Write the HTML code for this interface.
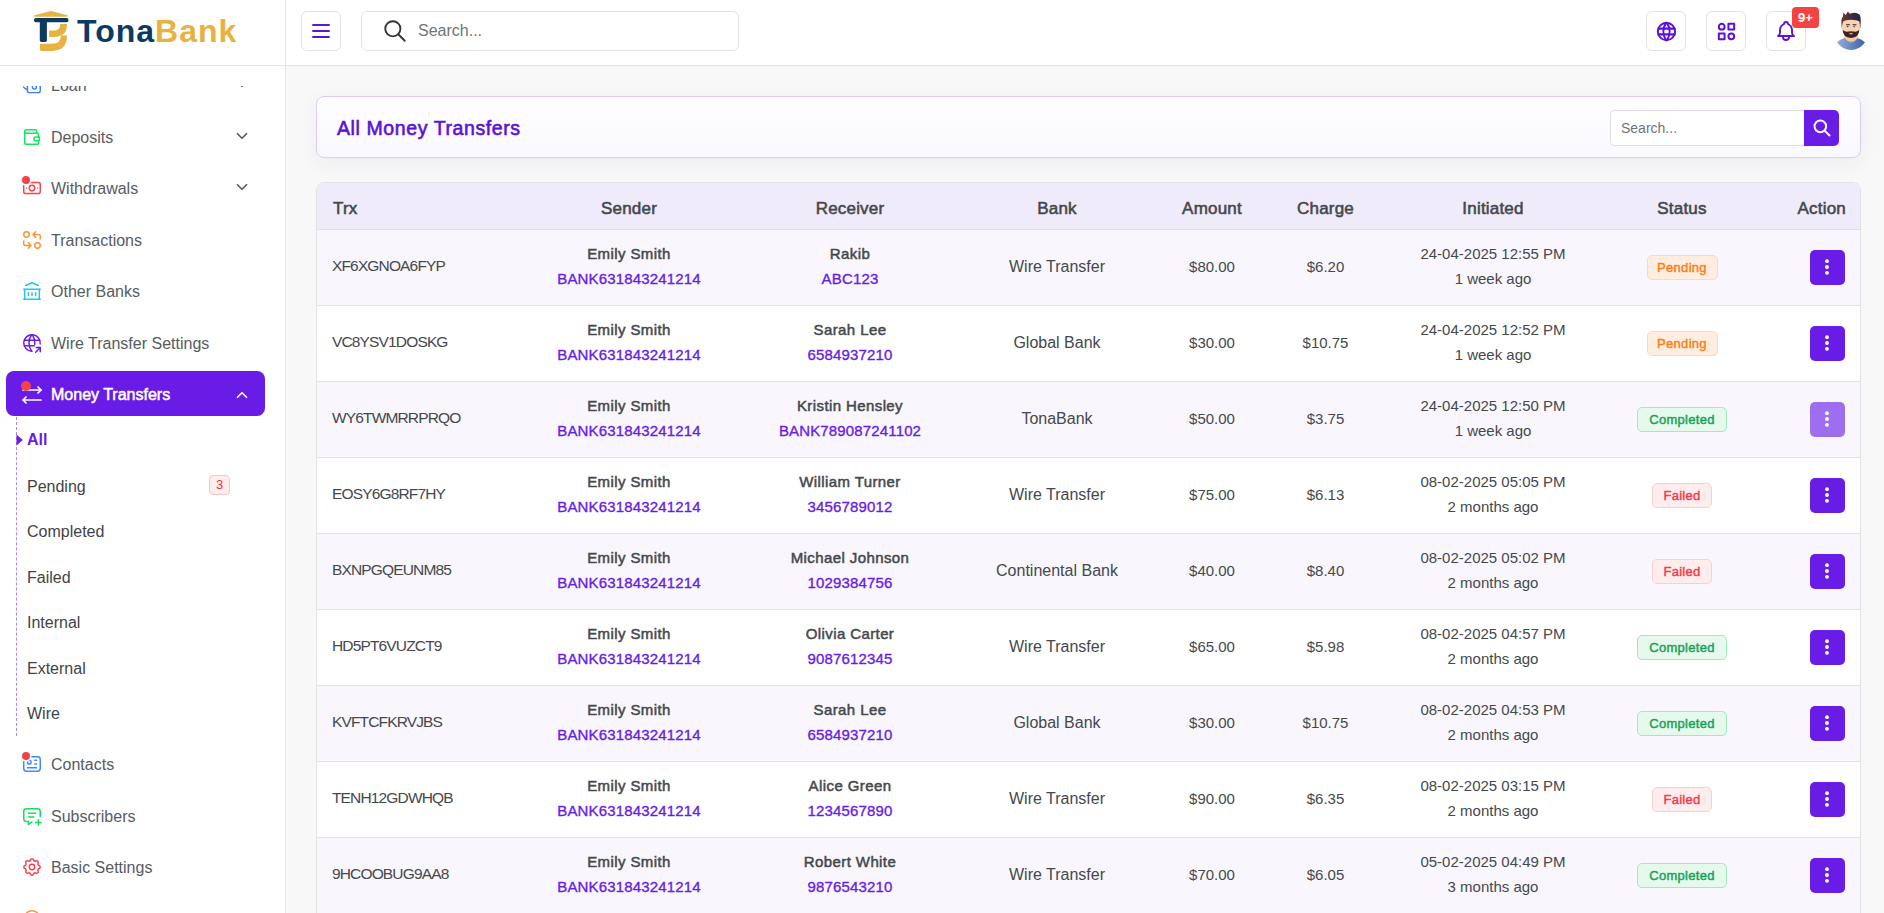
<!DOCTYPE html>
<html><head><meta charset="utf-8">
<style>
*{box-sizing:border-box;margin:0;padding:0}
html,body{width:1884px;height:913px;overflow:hidden}
body{font-family:"Liberation Sans",sans-serif;background:#f8f8f8;color:#444;position:relative}
.sidebar{position:absolute;left:0;top:0;width:286px;height:913px;background:#fff;border-right:1px solid #e6e6e6;overflow:hidden}
.logo{position:absolute;left:0;top:0;width:285px;height:66px;background:#fff;border-bottom:1px solid #e3e3e3;z-index:5}
.header{position:absolute;left:286px;top:0;width:1598px;height:66px;background:#fff;border-bottom:1px solid #e3e3e3}
.mi{position:absolute;left:6px;width:259px;height:46px;font-size:16px;color:#575b61}
.mi .tx{position:absolute;left:45px;top:2px;line-height:46px;white-space:nowrap}
.dot{position:absolute;width:9px;height:9px;border-radius:50%;background:#f3424a;box-shadow:0 0 0 1.5px #fff}
.sub{position:absolute;left:27px;margin-top:1.5px;font-size:16px;color:#3f4347;line-height:20px;white-space:nowrap}
.tcard{position:absolute;left:316px;top:96px;width:1545px;height:62px;background:linear-gradient(#fefeff,#f9f8fd);border:1px solid #dccbfb;border-radius:8px;box-shadow:0 6px 18px rgba(60,40,120,.06)}
.ttl{position:absolute;left:20px;top:0;line-height:60px;padding-top:1px;font-size:19.5px;letter-spacing:.6px;-webkit-text-stroke:.6px #5a12d8;color:#5a12d8;white-space:nowrap}
.sinp{position:absolute;left:1293px;top:13px;width:195px;height:36px;border:1px solid #dedede;border-right:0;border-radius:5px 0 0 5px;background:#fff}
.sinp span{position:absolute;left:10px;top:0;line-height:34px;font-size:14px;color:#6c757d}
.sbtn{position:absolute;left:1487px;top:13px;width:35px;height:36px;background:#681ce6;border-radius:0 5px 5px 0}
.tbl{position:absolute;left:316px;top:182px;width:1545px;height:760px;background:#fff;border:1px solid #e3e3e3;border-radius:8px 8px 0 0;overflow:hidden}
.thead{position:absolute;left:0;top:0;width:100%;height:47px;background:#efebfb;border-bottom:1px solid #e1dfe6}
.hc{position:absolute;margin-top:2.5px;font-size:17px;letter-spacing:.2px;-webkit-text-stroke:.55px #45474a;color:#45474a;line-height:20px;white-space:nowrap}
.row{position:absolute;left:0;width:100%;height:76px;border-bottom:1px solid #e3e3e6}
.rc{position:absolute;line-height:20px;white-space:nowrap;color:#45484c;font-size:15px}
.rc.nm,.rc.acc,.rc.bk,.rc.am{text-align:center}
.rc.trx{letter-spacing:-.85px;font-size:15.5px;margin-top:-1px}
.rc.nm{letter-spacing:.4px;-webkit-text-stroke:.5px #45484c}
.rc.acc{color:#681ce6;letter-spacing:.15px;-webkit-text-stroke:.35px #681ce6}
.rc.bk{font-size:16px}
.badge{position:absolute;top:25px;height:25px;border:1px solid;border-radius:5px;font-size:13px;letter-spacing:.3px;-webkit-text-stroke:.45px currentColor;line-height:23px;text-align:center}
.abtn{position:absolute;top:20px;width:35px;height:35px;background:#681ce6;border-radius:5px}
.hbtn{position:absolute;top:11px;width:40px;height:40px;border:1px solid #e3e3e3;border-radius:6px;background:#fff}
</style></head>
<body>
<div class="sidebar">
  <div class="logo">
    <svg style="position:absolute;left:28px;top:6px" width="50" height="50" viewBox="0 0 50 50">
      <path d="M6.5,9.3 L23,5 L39.5,9.3 Q40.5,10.7 38.5,10.7 L7.5,10.7 Q5.5,10.7 6.5,9.3Z" fill="#e8b242"/>
      <rect x="6" y="12" width="34.5" height="4.2" rx="2" fill="#0b3a62"/>
      <rect x="11.8" y="14" width="7.1" height="21.9" rx="1.6" fill="#0b3a62"/>
      <path d="M32.3,18 L39,18 Q39,30.9 26,30.9 L21.1,30.9 L21.1,24.6 L25.5,24.6 Q32.3,24.6 32.3,18Z" fill="#e8b242"/>
      <path d="M32.9,29.6 L39,29.6 Q39,44.9 24,44.9 L13.5,44.9 Q12,44.9 12,43.4 L12,37.8 L24,37.8 Q32.9,37.8 32.9,29.6Z" fill="#e8b242"/>
    </svg>
    <div style="position:absolute;left:77px;top:11px;font-size:32px;font-weight:700;line-height:40px;letter-spacing:1px;color:#0b3a62;white-space:nowrap">Tona<span style="color:#e8b242">Bank</span></div>
  </div>
<div style="position:absolute;left:0;top:86px;width:285px;height:827px;overflow:hidden"><div style="position:absolute;left:0;top:-86px;width:285px;height:1000px">
<div class="mi" style="top:61px"><svg style="position:absolute;left:15px;top:12.5px" width="22" height="22" viewBox="0 0 24 24" fill="none" stroke="#3b82f6" stroke-width="1.6" stroke-linecap="round" stroke-linejoin="round"><path d="M7 10a2 2 0 0 1 2 -2h10a2 2 0 0 1 2 2v8.3a2 2 0 0 1 -2 2h-10a2 2 0 0 1 -2 -2z"/><circle cx="14.6" cy="14.3" r="2.2"/><path d="M2.8 14.2l1.6 1.6q1 1 2.6 1"/></svg><span class="tx">Loan</span><svg style="position:absolute;left:227px;top:14px" width="18" height="18" viewBox="0 0 24 24" fill="none" stroke="#5a5d62" stroke-width="2.3" stroke-linecap="round" stroke-linejoin="round"><path d="M6 9l6 6l6 -6"/></svg></div>
<div class="mi" style="top:113px"><svg style="position:absolute;left:15px;top:12.5px" width="22" height="22" viewBox="0 0 24 24" fill="none" stroke="#12e85f" stroke-width="1.6" stroke-linecap="round" stroke-linejoin="round"><path d="M17 8v-3a1 1 0 0 0 -1 -1h-10a2 2 0 0 0 0 4h12a1 1 0 0 1 1 1v3m0 4v3a1 1 0 0 1 -1 1h-12a2 2 0 0 1 -2 -2v-12"/><path d="M20 12v4h-4a2 2 0 0 1 0 -4h4"/></svg><span class="tx">Deposits</span><svg style="position:absolute;left:227px;top:14px" width="18" height="18" viewBox="0 0 24 24" fill="none" stroke="#5a5d62" stroke-width="2.3" stroke-linecap="round" stroke-linejoin="round"><path d="M6 9l6 6l6 -6"/></svg></div>
<div class="mi" style="top:164px"><svg style="position:absolute;left:15px;top:12.5px" width="22" height="22" viewBox="0 0 24 24" fill="none" stroke="#f9424b" stroke-width="1.6" stroke-linecap="round" stroke-linejoin="round"><path d="M12 12m-3 0a3 3 0 1 0 6 0a3 3 0 1 0 -6 0"/><path d="M3 8a2 2 0 0 1 2 -2h14a2 2 0 0 1 2 2v8a2 2 0 0 1 -2 2h-14a2 2 0 0 1 -2 -2z"/><path d="M18 12l.01 0"/><path d="M6 12l.01 0"/></svg><span class="dot" style="left:16px;top:11.6px;width:8px;height:8px"></span><span class="tx">Withdrawals</span><svg style="position:absolute;left:227px;top:14px" width="18" height="18" viewBox="0 0 24 24" fill="none" stroke="#5a5d62" stroke-width="2.3" stroke-linecap="round" stroke-linejoin="round"><path d="M6 9l6 6l6 -6"/></svg></div>
<div class="mi" style="top:216px"><svg style="position:absolute;left:15px;top:12.5px" width="22" height="22" viewBox="0 0 24 24" fill="none" stroke="#fd9534" stroke-width="1.6" stroke-linecap="round" stroke-linejoin="round"><path d="M3 6a3 3 0 1 0 6 0a3 3 0 0 0 -6 0"/><path d="M21 11v-3a2 2 0 0 0 -2 -2h-6l3 3m0 -6l-3 3"/><path d="M3 13v3a2 2 0 0 0 2 2h6l-3 -3m0 6l3 -3"/><path d="M15 18a3 3 0 1 0 6 0a3 3 0 0 0 -6 0"/></svg><span class="tx">Transactions</span></div>
<div class="mi" style="top:267px"><svg style="position:absolute;left:15px;top:12.5px" width="22" height="22" viewBox="0 0 24 24" fill="none" stroke="#22c3f7" stroke-width="1.6" stroke-linecap="round" stroke-linejoin="round"><path d="M3 21l18 0"/><path d="M3 10l18 0"/><path d="M5 6l7 -3l7 3"/><path d="M4 10l0 11"/><path d="M20 10l0 11"/><path d="M8 14l0 3"/><path d="M12 14l0 3"/><path d="M16 14l0 3"/></svg><span class="tx">Other Banks</span></div>
<div class="mi" style="top:319px"><svg style="position:absolute;left:15px;top:12.5px" width="22" height="22" viewBox="0 0 24 24" fill="none" stroke="#681ce6" stroke-width="1.6" stroke-linecap="round" stroke-linejoin="round"><path d="M20.94 13.045a9 9 0 1 0 -8.953 7.955"/><path d="M3.6 9h16.8"/><path d="M3.6 15h10.9"/><path d="M11.5 3a17 17 0 0 0 0 18"/><path d="M12.5 3a16.991 16.991 0 0 1 2.529 10.294"/><path d="M16 22l5 -5"/><path d="M21 21.5v-4.5h-4.5"/></svg><span class="tx">Wire Transfer Settings</span></div>
<div class="mi act" style="top:371px;height:45px;background:#681ce6;border-radius:8px;color:#fff"><svg style="position:absolute;left:14px;top:11.5px" width="24" height="24" viewBox="0 0 24 24" fill="none" stroke="#fff" stroke-width="1.7" stroke-linecap="round" stroke-linejoin="round"><path d="M21 7l-18 0"/><path d="M18 10l3 -3l-3 -3"/><path d="M6 20l-3 -3l3 -3"/><path d="M3 17l18 0"/></svg><span class="dot" style="left:14.5px;top:9.5px;width:10px;height:10px;box-shadow:none"></span><span class="tx" style="line-height:45px;top:1px;font-size:16px;-webkit-text-stroke:.5px #fff">Money Transfers</span><svg style="position:absolute;left:227px;top:15px" width="18" height="18" viewBox="0 0 24 24" fill="none" stroke="#fff" stroke-width="2.2" stroke-linecap="round" stroke-linejoin="round"><path d="M6 15l6 -6l6 6"/></svg></div>
<div style="position:absolute;left:16px;top:417px;height:319px;border-left:1px dashed #ac88f5"></div>
<svg style="position:absolute;left:16px;top:434px" width="8" height="12" viewBox="0 0 8 12"><path d="M0.5 0.5L6.8 6L0.5 11.5Z" fill="#681ce6"/></svg>
<div class="sub" style="top:429px;color:#681ce6;font-weight:700;font-size:16px;margin-top:1px">All</div>
<div class="sub" style="top:475px">Pending</div>
<div class="sub" style="top:520px">Completed</div>
<div class="sub" style="top:566px">Failed</div>
<div class="sub" style="top:611px">Internal</div>
<div class="sub" style="top:657px">External</div>
<div class="sub" style="top:702px">Wire</div>
<div style="position:absolute;left:209px;top:475px;width:21px;height:20px;border:1px solid #fcc6c6;background:#feeded;border-radius:4px;color:#f53535;font-size:13px;line-height:18px;text-align:center">3</div>
<div class="mi" style="top:740px"><svg style="position:absolute;left:15px;top:12.5px" width="22" height="22" viewBox="0 0 24 24" fill="none" stroke="#3b8bfb" stroke-width="1.6" stroke-linecap="round" stroke-linejoin="round"><path d="M3 7a3 3 0 0 1 3 -3h12a3 3 0 0 1 3 3v10a3 3 0 0 1 -3 3h-12a3 3 0 0 1 -3 -3z"/><path d="M9 10m-2 0a2 2 0 1 0 4 0a2 2 0 1 0 -4 0"/><path d="M15 8l2 0"/><path d="M15 12l2 0"/><path d="M7 16l10 0"/></svg><span class="dot" style="left:16px;top:11.6px;width:8px;height:8px"></span><span class="tx">Contacts</span></div>
<div class="mi" style="top:792px"><svg style="position:absolute;left:15px;top:12.5px" width="22" height="22" viewBox="0 0 24 24" fill="none" stroke="#12e05a" stroke-width="1.6" stroke-linecap="round" stroke-linejoin="round"><path d="M8 9h8"/><path d="M8 13h6"/><path d="M12.01 18.594l-4.01 2.406v-3h-2a3 3 0 0 1 -3 -3v-8a3 3 0 0 1 3 -3h12a3 3 0 0 1 3 3v5.5"/><path d="M16 19h6"/><path d="M19 16v6"/></svg><span class="tx">Subscribers</span></div>
<div class="mi" style="top:843px"><svg style="position:absolute;left:15px;top:12.5px" width="22" height="22" viewBox="0 0 24 24" fill="none" stroke="#f9424b" stroke-width="1.6" stroke-linecap="round" stroke-linejoin="round"><path d="M10.325 4.317c.426 -1.756 2.924 -1.756 3.35 0a1.724 1.724 0 0 0 2.573 1.066c1.543 -.94 3.31 .826 2.37 2.37a1.724 1.724 0 0 0 1.065 2.572c1.756 .426 1.756 2.924 0 3.35a1.724 1.724 0 0 0 -1.066 2.573c.94 1.543 -.826 3.31 -2.37 2.37a1.724 1.724 0 0 0 -2.572 1.065c-.426 1.756 -2.924 1.756 -3.35 0a1.724 1.724 0 0 0 -2.573 -1.066c-1.543 .94 -3.31 -.826 -2.37 -2.37a1.724 1.724 0 0 0 -1.065 -2.572c-1.756 -.426 -1.756 -2.924 0 -3.35a1.724 1.724 0 0 0 1.066 -2.573c-.94 -1.543 .826 -3.31 2.37 -2.37c1 .608 2.296 .07 2.572 -1.065z"/><path d="M9 12a3 3 0 1 0 6 0a3 3 0 0 0 -6 0"/></svg><span class="tx">Basic Settings</span></div>
<div class="mi" style="top:895px"><svg style="position:absolute;left:15px;top:12.5px" width="22" height="22" viewBox="0 0 24 24" fill="none" stroke="#fd9534" stroke-width="1.6" stroke-linecap="round" stroke-linejoin="round"><path d="M3 12a9 9 0 1 0 18 0a9 9 0 0 0 -18 0"/></svg><span class="tx">Support</span></div>
</div></div>
</div>
<div class="header">
<div class="hbtn" style="left:15px"><svg style="position:absolute;left:7px;top:7px" width="24" height="24" viewBox="0 0 24 24" fill="none" stroke="#5c12d8" stroke-width="1.9" stroke-linecap="round" stroke-linejoin="round"><path d="M4 6l16 0"/><path d="M4 12l16 0"/><path d="M4 18l16 0"/></svg></div><div style="position:absolute;left:75px;top:11px;width:378px;height:40px;border:1px solid #e3e3e3;border-radius:6px"><svg style="position:absolute;left:20px;top:6px" width="26" height="26" viewBox="0 0 24 24" fill="none" stroke="#333" stroke-width="1.7" stroke-linecap="round" stroke-linejoin="round"><path d="M10 10m-7 0a7 7 0 1 0 14 0a7 7 0 1 0 -14 0"/><path d="M21 21l-6 -6"/></svg><span style="position:absolute;left:56px;top:0;line-height:38px;font-size:16px;color:#6c757d">Search...</span></div><div class="hbtn" style="left:1360px"><svg style="position:absolute;left:7.5px;top:7.5px" width="23" height="23" viewBox="0 0 24 24" fill="none" stroke="#5c12d8" stroke-width="2.1" stroke-linecap="round" stroke-linejoin="round"><path d="M3 12a9 9 0 1 0 18 0a9 9 0 0 0 -18 0"/><path d="M3.6 9h16.8"/><path d="M3.6 15h16.8"/><path d="M11.5 3a17 17 0 0 0 0 18"/><path d="M12.5 3a17 17 0 0 1 0 18"/></svg></div><div class="hbtn" style="left:1420px"><svg style="position:absolute;left:7.5px;top:7.5px" width="23" height="23" viewBox="0 0 24 24" fill="none" stroke="#5c12d8" stroke-width="2.1" stroke-linecap="round" stroke-linejoin="round"><path d="M14 4h6v6h-6z"/><path d="M4 14h6v6h-6z"/><path d="M17 17m-3 0a3 3 0 1 0 6 0a3 3 0 1 0 -6 0"/><path d="M7 7m-3 0a3 3 0 1 0 6 0a3 3 0 1 0 -6 0"/></svg></div><div class="hbtn" style="left:1480px"><svg style="position:absolute;left:7px;top:7px" width="24" height="24" viewBox="0 0 24 24" fill="none" stroke="#5c12d8" stroke-width="1.9" stroke-linecap="round" stroke-linejoin="round"><path d="M10 5a2 2 0 1 1 4 0a7 7 0 0 1 4 6v3a4 4 0 0 0 2 3h-16a4 4 0 0 0 2 -3v-3a7 7 0 0 1 4 -6"/><path d="M9 17v1a3 3 0 0 0 6 0v-1"/></svg></div><div style="position:absolute;left:1506px;top:7px;width:27px;height:21px;background:#f44343;border-radius:4px;color:#fff;font-size:13px;font-weight:700;line-height:21px;text-align:center">9+</div><div style="position:absolute;left:1545px;top:11px;width:40px;height:40px;border-radius:50%;overflow:hidden"><svg width="40" height="40" viewBox="0 0 40 40"><defs><linearGradient id="sh" x1="0" x2="1"><stop offset="0" stop-color="#8eb0dc"/><stop offset="1" stop-color="#3b62a6"/></linearGradient><linearGradient id="hr" x1="0" x2="1"><stop offset="0" stop-color="#6b3a2e"/><stop offset="0.6" stop-color="#3e2a3a"/><stop offset="1" stop-color="#1d2a4e"/></linearGradient></defs><path d="M6 31.5 Q9 28.3 13 27.2 Q20 35.5 27 27.2 Q31 28.3 34 31.5 Q28 39 20 39 Q12 39 6 31.5Z" fill="url(#sh)"/><path d="M13.5 21 L26.5 21 L27 27.2 Q20 35.5 13 27.2Z" fill="#f3c7a4"/><path d="M13 27.2 Q20 35.5 27 27.2" fill="none" stroke="#5a5f8a" stroke-width=".5"/><ellipse cx="11.3" cy="15.8" rx="1.3" ry="2" fill="#f0c09c"/><ellipse cx="28.7" cy="15.8" rx="1.3" ry="2" fill="#e9b08c"/><path d="M11.5 12 Q11.5 6 20 6 Q28.5 6 28.5 12 L28.5 19 Q28 26.5 20 26.8 Q12 26.5 11.5 19Z" fill="#f7d2b2"/><path d="M11.6 18.5 Q12 26.8 20 26.9 Q28 26.8 28.4 18.5 L27.6 19.5 Q26 21 22.5 20.5 Q20 20 17.5 20.5 Q14 21 12.4 19.5Z" fill="#3a2221"/><path d="M18 22 Q20 21.3 22 22 L21.5 23.2 Q20 23.6 18.5 23.2Z" fill="#d9866a"/><path d="M10.8 16 Q9.3 8 12 5.5 L12.3 1.8 L14.8 4 L16.8 0.4 L18.8 2.8 Q25 0.3 28.6 3.8 Q30.6 7 29.2 16 L28.3 10.5 Q26 8.8 20 8.8 Q14 8.8 12 10.8Z" fill="url(#hr)"/><rect x="15" y="13.3" width="4" height="1" rx=".5" fill="#2b1b1b"/><rect x="21.5" y="13.3" width="4" height="1" rx=".5" fill="#2b1b1b"/><ellipse cx="16.6" cy="15.6" rx="1" ry=".6" fill="#3a3f44"/><ellipse cx="23.2" cy="15.6" rx="1" ry=".6" fill="#3a3f44"/></svg></div>
</div>
<div class="tcard"><div class="ttl">All Money Transfers</div><div class="sinp"><span>Search...</span></div><div class="sbtn"><svg width="20" height="20" viewBox="0 0 24 24" fill="none" stroke="#fff" stroke-width="2.4" stroke-linecap="round" style="position:absolute;left:7.5px;top:7.5px"><path d="M10 10m-7 0a7 7 0 1 0 14 0a7 7 0 1 0 -14 0"/><path d="M21 21l-6 -6"/></svg></div></div>
<div class="tbl"><div class="thead"></div><div class="hc" style="left:16px;top:13px">Trx</div><div class="hc" style="left:232.0px;width:160px;text-align:center;top:13px">Sender</div><div class="hc" style="left:453.0px;width:160px;text-align:center;top:13px">Receiver</div><div class="hc" style="left:660.0px;width:160px;text-align:center;top:13px">Bank</div><div class="hc" style="left:815.0px;width:160px;text-align:center;top:13px">Amount</div><div class="hc" style="left:928.5px;width:160px;text-align:center;top:13px">Charge</div><div class="hc" style="left:1096.0px;width:160px;text-align:center;top:13px">Initiated</div><div class="hc" style="left:1285.0px;width:160px;text-align:center;top:13px">Status</div><div class="hc" style="left:1378px;width:151px;text-align:right;top:13px">Action</div><div class="row" style="top:47px;background:#f9f7fd"><div class="rc trx" style="left:15px;top:27px">XF6XGNOA6FYP</div><div class="rc nm" style="left:192px;width:240px;top:14px">Emily Smith</div><div class="rc acc" style="left:192px;width:240px;top:39px">BANK631843241214</div><div class="rc nm" style="left:413px;width:240px;top:14px">Rakib</div><div class="rc acc" style="left:413px;width:240px;top:39px">ABC123</div><div class="rc bk" style="left:640px;width:200px;top:27px">Wire Transfer</div><div class="rc am" style="left:835px;width:120px;top:27px">$80.00</div><div class="rc am" style="left:948.5px;width:120px;top:27px">$6.20</div><div class="rc am" style="left:1076px;width:200px;top:14px">24-04-2025 12:55 PM</div><div class="rc am" style="left:1076px;width:200px;top:39px">1 week ago</div><div class="badge" style="left:1329.5px;width:71px;color:#fd7e14;background:#ffeedf;border-color:#ffd8b5">Pending</div><div class="abtn" style="left:1493px"><svg width="20" height="20" viewBox="0 0 24 24" fill="#fff" stroke="#fff" stroke-width="1.6" style="position:absolute;left:7px;top:6.7px"><circle cx="12" cy="5" r="1.5"/><circle cx="12" cy="12" r="1.5"/><circle cx="12" cy="19" r="1.5"/></svg></div></div><div class="row" style="top:123px;background:#fff"><div class="rc trx" style="left:15px;top:27px">VC8YSV1DOSKG</div><div class="rc nm" style="left:192px;width:240px;top:14px">Emily Smith</div><div class="rc acc" style="left:192px;width:240px;top:39px">BANK631843241214</div><div class="rc nm" style="left:413px;width:240px;top:14px">Sarah Lee</div><div class="rc acc" style="left:413px;width:240px;top:39px">6584937210</div><div class="rc bk" style="left:640px;width:200px;top:27px">Global Bank</div><div class="rc am" style="left:835px;width:120px;top:27px">$30.00</div><div class="rc am" style="left:948.5px;width:120px;top:27px">$10.75</div><div class="rc am" style="left:1076px;width:200px;top:14px">24-04-2025 12:52 PM</div><div class="rc am" style="left:1076px;width:200px;top:39px">1 week ago</div><div class="badge" style="left:1329.5px;width:71px;color:#fd7e14;background:#ffeedf;border-color:#ffd8b5">Pending</div><div class="abtn" style="left:1493px"><svg width="20" height="20" viewBox="0 0 24 24" fill="#fff" stroke="#fff" stroke-width="1.6" style="position:absolute;left:7px;top:6.7px"><circle cx="12" cy="5" r="1.5"/><circle cx="12" cy="12" r="1.5"/><circle cx="12" cy="19" r="1.5"/></svg></div></div><div class="row" style="top:199px;background:#f9f7fd"><div class="rc trx" style="left:15px;top:27px">WY6TWMRRPRQO</div><div class="rc nm" style="left:192px;width:240px;top:14px">Emily Smith</div><div class="rc acc" style="left:192px;width:240px;top:39px">BANK631843241214</div><div class="rc nm" style="left:413px;width:240px;top:14px">Kristin Hensley</div><div class="rc acc" style="left:413px;width:240px;top:39px">BANK789087241102</div><div class="rc bk" style="left:640px;width:200px;top:27px">TonaBank</div><div class="rc am" style="left:835px;width:120px;top:27px">$50.00</div><div class="rc am" style="left:948.5px;width:120px;top:27px">$3.75</div><div class="rc am" style="left:1076px;width:200px;top:14px">24-04-2025 12:50 PM</div><div class="rc am" style="left:1076px;width:200px;top:39px">1 week ago</div><div class="badge" style="left:1320.0px;width:90px;color:#15a257;background:#e6f9ed;border-color:#a3e8be">Completed</div><div class="abtn" style="left:1493px;opacity:.62"><svg width="20" height="20" viewBox="0 0 24 24" fill="#fff" stroke="#fff" stroke-width="1.6" style="position:absolute;left:7px;top:6.7px"><circle cx="12" cy="5" r="1.5"/><circle cx="12" cy="12" r="1.5"/><circle cx="12" cy="19" r="1.5"/></svg></div></div><div class="row" style="top:275px;background:#fff"><div class="rc trx" style="left:15px;top:27px">EOSY6G8RF7HY</div><div class="rc nm" style="left:192px;width:240px;top:14px">Emily Smith</div><div class="rc acc" style="left:192px;width:240px;top:39px">BANK631843241214</div><div class="rc nm" style="left:413px;width:240px;top:14px">William Turner</div><div class="rc acc" style="left:413px;width:240px;top:39px">3456789012</div><div class="rc bk" style="left:640px;width:200px;top:27px">Wire Transfer</div><div class="rc am" style="left:835px;width:120px;top:27px">$75.00</div><div class="rc am" style="left:948.5px;width:120px;top:27px">$6.13</div><div class="rc am" style="left:1076px;width:200px;top:14px">08-02-2025 05:05 PM</div><div class="rc am" style="left:1076px;width:200px;top:39px">2 months ago</div><div class="badge" style="left:1335.0px;width:60px;color:#f03d46;background:#ffeded;border-color:#ffcdcf">Failed</div><div class="abtn" style="left:1493px"><svg width="20" height="20" viewBox="0 0 24 24" fill="#fff" stroke="#fff" stroke-width="1.6" style="position:absolute;left:7px;top:6.7px"><circle cx="12" cy="5" r="1.5"/><circle cx="12" cy="12" r="1.5"/><circle cx="12" cy="19" r="1.5"/></svg></div></div><div class="row" style="top:351px;background:#f9f7fd"><div class="rc trx" style="left:15px;top:27px">BXNPGQEUNM85</div><div class="rc nm" style="left:192px;width:240px;top:14px">Emily Smith</div><div class="rc acc" style="left:192px;width:240px;top:39px">BANK631843241214</div><div class="rc nm" style="left:413px;width:240px;top:14px">Michael Johnson</div><div class="rc acc" style="left:413px;width:240px;top:39px">1029384756</div><div class="rc bk" style="left:640px;width:200px;top:27px">Continental Bank</div><div class="rc am" style="left:835px;width:120px;top:27px">$40.00</div><div class="rc am" style="left:948.5px;width:120px;top:27px">$8.40</div><div class="rc am" style="left:1076px;width:200px;top:14px">08-02-2025 05:02 PM</div><div class="rc am" style="left:1076px;width:200px;top:39px">2 months ago</div><div class="badge" style="left:1335.0px;width:60px;color:#f03d46;background:#ffeded;border-color:#ffcdcf">Failed</div><div class="abtn" style="left:1493px"><svg width="20" height="20" viewBox="0 0 24 24" fill="#fff" stroke="#fff" stroke-width="1.6" style="position:absolute;left:7px;top:6.7px"><circle cx="12" cy="5" r="1.5"/><circle cx="12" cy="12" r="1.5"/><circle cx="12" cy="19" r="1.5"/></svg></div></div><div class="row" style="top:427px;background:#fff"><div class="rc trx" style="left:15px;top:27px">HD5PT6VUZCT9</div><div class="rc nm" style="left:192px;width:240px;top:14px">Emily Smith</div><div class="rc acc" style="left:192px;width:240px;top:39px">BANK631843241214</div><div class="rc nm" style="left:413px;width:240px;top:14px">Olivia Carter</div><div class="rc acc" style="left:413px;width:240px;top:39px">9087612345</div><div class="rc bk" style="left:640px;width:200px;top:27px">Wire Transfer</div><div class="rc am" style="left:835px;width:120px;top:27px">$65.00</div><div class="rc am" style="left:948.5px;width:120px;top:27px">$5.98</div><div class="rc am" style="left:1076px;width:200px;top:14px">08-02-2025 04:57 PM</div><div class="rc am" style="left:1076px;width:200px;top:39px">2 months ago</div><div class="badge" style="left:1320.0px;width:90px;color:#15a257;background:#e6f9ed;border-color:#a3e8be">Completed</div><div class="abtn" style="left:1493px"><svg width="20" height="20" viewBox="0 0 24 24" fill="#fff" stroke="#fff" stroke-width="1.6" style="position:absolute;left:7px;top:6.7px"><circle cx="12" cy="5" r="1.5"/><circle cx="12" cy="12" r="1.5"/><circle cx="12" cy="19" r="1.5"/></svg></div></div><div class="row" style="top:503px;background:#f9f7fd"><div class="rc trx" style="left:15px;top:27px">KVFTCFKRVJBS</div><div class="rc nm" style="left:192px;width:240px;top:14px">Emily Smith</div><div class="rc acc" style="left:192px;width:240px;top:39px">BANK631843241214</div><div class="rc nm" style="left:413px;width:240px;top:14px">Sarah Lee</div><div class="rc acc" style="left:413px;width:240px;top:39px">6584937210</div><div class="rc bk" style="left:640px;width:200px;top:27px">Global Bank</div><div class="rc am" style="left:835px;width:120px;top:27px">$30.00</div><div class="rc am" style="left:948.5px;width:120px;top:27px">$10.75</div><div class="rc am" style="left:1076px;width:200px;top:14px">08-02-2025 04:53 PM</div><div class="rc am" style="left:1076px;width:200px;top:39px">2 months ago</div><div class="badge" style="left:1320.0px;width:90px;color:#15a257;background:#e6f9ed;border-color:#a3e8be">Completed</div><div class="abtn" style="left:1493px"><svg width="20" height="20" viewBox="0 0 24 24" fill="#fff" stroke="#fff" stroke-width="1.6" style="position:absolute;left:7px;top:6.7px"><circle cx="12" cy="5" r="1.5"/><circle cx="12" cy="12" r="1.5"/><circle cx="12" cy="19" r="1.5"/></svg></div></div><div class="row" style="top:579px;background:#fff"><div class="rc trx" style="left:15px;top:27px">TENH12GDWHQB</div><div class="rc nm" style="left:192px;width:240px;top:14px">Emily Smith</div><div class="rc acc" style="left:192px;width:240px;top:39px">BANK631843241214</div><div class="rc nm" style="left:413px;width:240px;top:14px">Alice Green</div><div class="rc acc" style="left:413px;width:240px;top:39px">1234567890</div><div class="rc bk" style="left:640px;width:200px;top:27px">Wire Transfer</div><div class="rc am" style="left:835px;width:120px;top:27px">$90.00</div><div class="rc am" style="left:948.5px;width:120px;top:27px">$6.35</div><div class="rc am" style="left:1076px;width:200px;top:14px">08-02-2025 03:15 PM</div><div class="rc am" style="left:1076px;width:200px;top:39px">2 months ago</div><div class="badge" style="left:1335.0px;width:60px;color:#f03d46;background:#ffeded;border-color:#ffcdcf">Failed</div><div class="abtn" style="left:1493px"><svg width="20" height="20" viewBox="0 0 24 24" fill="#fff" stroke="#fff" stroke-width="1.6" style="position:absolute;left:7px;top:6.7px"><circle cx="12" cy="5" r="1.5"/><circle cx="12" cy="12" r="1.5"/><circle cx="12" cy="19" r="1.5"/></svg></div></div><div class="row" style="top:655px;background:#f9f7fd"><div class="rc trx" style="left:15px;top:27px">9HCOOBUG9AA8</div><div class="rc nm" style="left:192px;width:240px;top:14px">Emily Smith</div><div class="rc acc" style="left:192px;width:240px;top:39px">BANK631843241214</div><div class="rc nm" style="left:413px;width:240px;top:14px">Robert White</div><div class="rc acc" style="left:413px;width:240px;top:39px">9876543210</div><div class="rc bk" style="left:640px;width:200px;top:27px">Wire Transfer</div><div class="rc am" style="left:835px;width:120px;top:27px">$70.00</div><div class="rc am" style="left:948.5px;width:120px;top:27px">$6.05</div><div class="rc am" style="left:1076px;width:200px;top:14px">05-02-2025 04:49 PM</div><div class="rc am" style="left:1076px;width:200px;top:39px">3 months ago</div><div class="badge" style="left:1320.0px;width:90px;color:#15a257;background:#e6f9ed;border-color:#a3e8be">Completed</div><div class="abtn" style="left:1493px"><svg width="20" height="20" viewBox="0 0 24 24" fill="#fff" stroke="#fff" stroke-width="1.6" style="position:absolute;left:7px;top:6.7px"><circle cx="12" cy="5" r="1.5"/><circle cx="12" cy="12" r="1.5"/><circle cx="12" cy="19" r="1.5"/></svg></div></div></div>
</body></html>
